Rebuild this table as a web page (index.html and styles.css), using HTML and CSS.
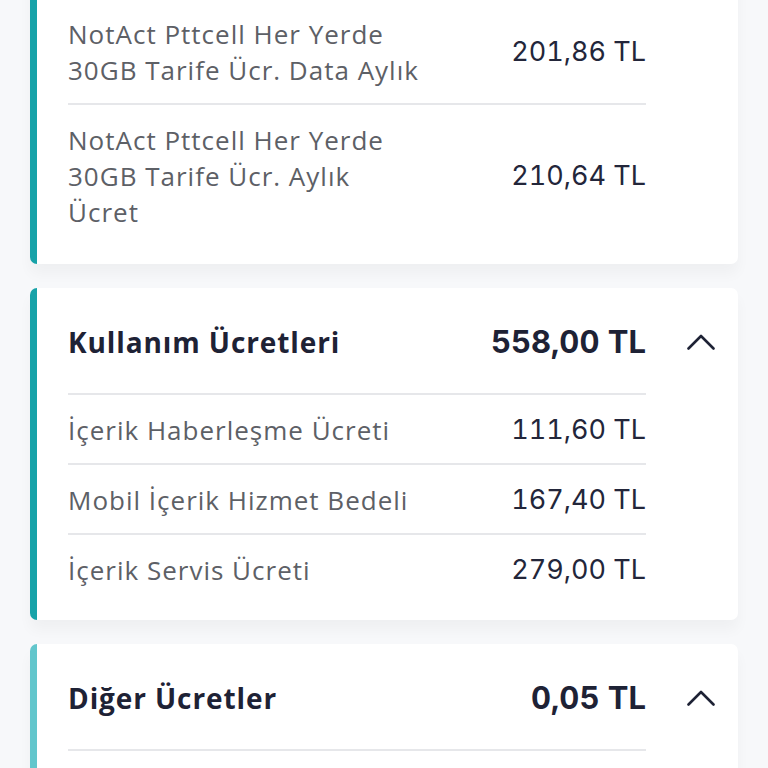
FILE: index.html
```html
<!DOCTYPE html>
<html lang="tr">
<head>
<meta charset="utf-8">
<link rel="stylesheet" href="styles.css">
</head>
<body>
<div class="page">
  <section class="card">
    <div class="card-body first">
      <div class="row">
        <div class="label">NotAct Pttcell Her Yerde<br>30GB Tarife Ücr. Data Aylık</div>
        <div class="amount">201,86 TL</div>
      </div>
      <div class="row">
        <div class="label">NotAct Pttcell Her Yerde<br>30GB Tarife Ücr. Aylık<br>Ücret</div>
        <div class="amount">210,64 TL</div>
      </div>
    </div>
  </section>

  <section class="card">
    <div class="card-body">
      <div class="header">
        <div class="title">Kullanım Ücretleri</div>
        <div class="total">558,00 TL</div>
        <span class="chev"><svg width="28" height="16" viewBox="0 0 28 16"><path d="M1.5 14.5 L14 2 L26.5 14.5" fill="none" stroke="#1e2235" stroke-width="2.6" stroke-linecap="round" stroke-linejoin="round"/></svg></span>
      </div>
      <div class="row">
        <div class="label">İçerik Haberleşme Ücreti</div>
        <div class="amount">111,60 TL</div>
      </div>
      <div class="row">
        <div class="label">Mobil İçerik Hizmet Bedeli</div>
        <div class="amount">167,40 TL</div>
      </div>
      <div class="row">
        <div class="label">İçerik Servis Ücreti</div>
        <div class="amount">279,00 TL</div>
      </div>
    </div>
  </section>

  <section class="card light">
    <div class="card-body open">
      <div class="header">
        <div class="title">Diğer Ücretler</div>
        <div class="total">0,05 TL</div>
        <span class="chev"><svg width="28" height="16" viewBox="0 0 28 16"><path d="M1.5 14.5 L14 2 L26.5 14.5" fill="none" stroke="#1e2235" stroke-width="2.6" stroke-linecap="round" stroke-linejoin="round"/></svg></span>
      </div>
    </div>
  </section>
</div>
</body>
</html>
```

FILE: styles.css
```css
html, body {
  margin: 0;
  padding: 0;
  background: #f7f8fa;
  font-family: "Open Sans", "Noto Sans", sans-serif;
}

.page {
  margin-top: -40px;
  padding: 0 30px 0 30px;
  display: flex;
  flex-direction: column;
  gap: 24px;
  height: 808px;
  overflow: hidden;
}

.card {
  background: #ffffff;
  border-left: 7px solid #17a2a8;
  border-radius: 7px;
  box-shadow: 0 10px 14px rgba(0, 0, 0, 0.035);
  flex: none;
}

.card.light {
  border-left-color: #62c6cc;
}

.card-body {
  padding: 0 92px 17px 31px;
}

.card-body.first {
  padding-top: 39px;
  padding-bottom: 19px;
}

.card-body.open {
  padding-bottom: 60px;
}

.header {
  display: flex;
  align-items: center;
  padding: 36px 0 33px 0;
  border-bottom: 2px solid #e6e7ea;
}

.title {
  flex: 1;
  font-size: 28px;
  line-height: 36px;
  font-weight: 700;
  letter-spacing: 0.9px;
  color: #1e2235;
}

.total {
  font-family: "Inter", "Roboto", sans-serif;
  font-size: 31px;
  line-height: 36px;
  font-weight: 700;
  font-variant-numeric: tabular-nums;
  color: #1e2235;
  text-align: right;
}

.chev {
  display: flex;
  margin-left: 41px;
  margin-right: -69px;
  width: 28px;
  height: 16px;
  flex: none;
}

.row {
  display: flex;
  align-items: center;
  justify-content: space-between;
  padding: 17px 0 15px 0;
  border-top: 2px solid #e6e7ea;
}

.row:first-child,
.header + .row {
  border-top: none;
}

.label {
  font-size: 26px;
  line-height: 36px;
  letter-spacing: 1px;
  color: #5d6066;
}

.amount {
  font-family: "Inter", "Roboto", sans-serif;
  font-size: 27px;
  line-height: 36px;
  font-variant-numeric: tabular-nums;
  color: #23263a;
  text-align: right;
  white-space: nowrap;
}
```
